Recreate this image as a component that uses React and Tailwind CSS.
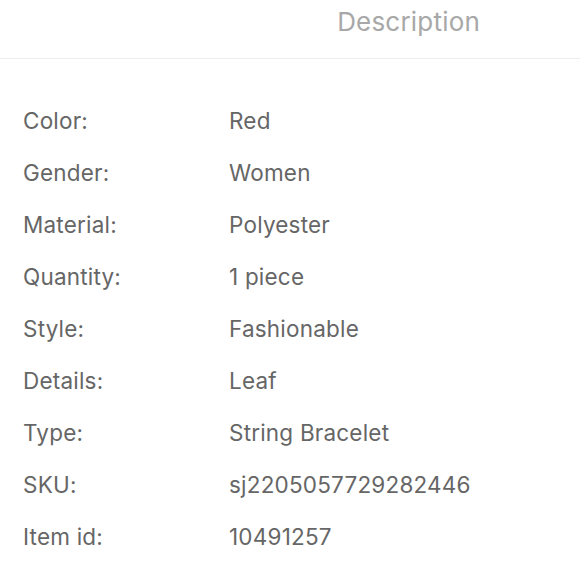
const rows = [
  ["Color:", "Red"],
  ["Gender:", "Women"],
  ["Material:", "Polyester"],
  ["Quantity:", "1 piece"],
  ["Style:", "Fashionable"],
  ["Details:", "Leaf"],
  ["Type:", "String Bracelet"],
  ["SKU:", "sj2205057729282446"],
  ["Item id:", "10491257"],
];

export default function App() {
  return (
    <div className="w-[580px] h-[580px] bg-white overflow-hidden font-['Inter',sans-serif]">
      <div className="h-[59px] border-b border-[#ededed] flex items-start justify-end pr-[100px] pt-[8px]">
        <span className="text-[26px] text-[#a8a8a8] leading-[28px] tracking-[0.2px]">Description</span>
      </div>
      <div className="pt-[47px] px-[23px]">
        {rows.map(([label, value]) => (
          <div key={label} className="flex h-[52px] items-start text-[22.5px] text-[#666666] leading-[30px] tracking-[0.2px]">
            <span className="w-[206px] shrink-0">{label}</span>
            <span>{value}</span>
          </div>
        ))}
      </div>
    </div>
  );
}
